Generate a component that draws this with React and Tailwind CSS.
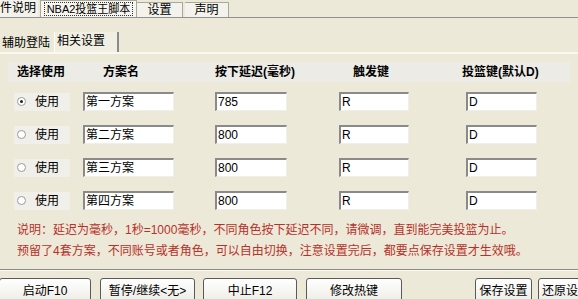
import React from "react";

const font = { fontFamily: '"Liberation Sans", "Noto Sans CJK SC", sans-serif' };

function Radio({ checked }) {
  return (
    <span className="relative inline-block w-[9px] h-[9px] rounded-full border border-[#9a9a9a] bg-white">
      {checked && <span className="absolute left-[2px] top-[2px] w-[3px] h-[3px] rounded-full bg-[#222]" />}
    </span>
  );
}

function Input({ value, w }) {
  return (
    <div
      className={`h-[19px] bg-white border-t-2 border-l-2 border-t-[#8a8a8a] border-l-[#8a8a8a] border-b border-r border-b-[#f0efe8] border-r-[#f0efe8] pl-[1px] text-[12px] leading-[16px] text-black ${w}`}
    >
      {value}
    </div>
  );
}

function Btn({ children, w, className = "" }) {
  return (
    <div
      className={`h-[26px] shrink-0 rounded-[3px] border border-[#5a5a5a] bg-gradient-to-b from-[#ffffff] to-[#ecebe4] flex items-start justify-center pt-[4px] text-[12px] leading-[16px] text-black whitespace-nowrap overflow-hidden ${w} ${className}`}
    >
      {children}
    </div>
  );
}

const rows = [
  { checked: true, name: "第一方案", delay: "785" },
  { checked: false, name: "第二方案", delay: "800" },
  { checked: false, name: "第三方案", delay: "800" },
  { checked: false, name: "第四方案", delay: "800" },
];

export default function App() {
  return (
    <div className="w-[578px] h-[299px] overflow-hidden bg-[#ece9d8] relative" style={font}>
      {/* top tabs */}
      <div className="h-[17px] flex items-end text-[12px] leading-[15px] text-black">
        <div className="w-[38px] h-[17px] pt-[1px] bg-[#f3f2ec]">件说明</div>
        <div className="ml-[2px] w-[97px] h-[17px] bg-[#f6f5ef] border-t border-x border-[#a8a89c] flex items-center justify-center">
          <span className="border border-dotted border-[#333] px-[2px] leading-[12px] text-[11px]">NBA2投篮王脚本</span>
        </div>
        <div className="w-[46px] h-[15px] bg-[#f3f2ec] border-t border-r border-[#a8a89c] text-center">设置</div>
        <div className="ml-[2px] w-[44px] h-[15px] bg-[#f3f2ec] border-t border-r border-[#a8a89c] text-center">声明</div>
      </div>
      <div className="h-[1px] bg-[#919191]" />
      {/* sub tabs */}
      <div className="h-[34px] flex items-end pl-[2px] text-[12px] text-black">
        <div className="w-[52px] h-[18px] leading-[18px]">辅助登陆</div>
        <div className="w-[65px] h-[20px] leading-[18px] pl-[2px] bg-[#f1efe4] border-r-2 border-r-[#8a8a8a] border-l border-l-white">相关设置</div>
      </div>
      <div className="h-[2px] bg-[#fbf9ee]" />
      {/* header */}
      <div className="mt-[8px] h-[20px] mx-[8px] bg-[#ecebe6] flex items-center text-[12px] font-bold text-black leading-[20px]">
        <div className="w-[95px] pl-[9px]">选择使用</div>
        <div className="w-[112px]">方案名</div>
        <div className="w-[138px]">按下延迟(毫秒)</div>
        <div className="w-[109px]">触发键</div>
        <div>投篮键(默认D)</div>
      </div>
      {/* rows */}
      <div className="mt-[10px] flex flex-col gap-[14px]">
        {rows.map((r, i) => (
          <div key={i} className="h-[19px] flex items-center">
            <div className="ml-[14px] w-[56px] h-[18px] bg-[#f0efea] flex items-center pl-[3px] gap-[9px] text-[12px]">
              <Radio checked={r.checked} />
              <span>使用</span>
            </div>
            <div className="ml-[13px]"><Input value={r.name} w="w-[91px]" /></div>
            <div className="ml-[41px]"><Input value={r.delay} w="w-[72px]" /></div>
            <div className="ml-[52px]"><Input value="R" w="w-[70px]" /></div>
            <div className="ml-[57px]"><Input value="D" w="w-[71px]" /></div>
          </div>
        ))}
      </div>
      {/* notes */}
      <div className="mt-[10px] pl-[17px] text-[12px] leading-[21px] text-[#b8302a]">
        <div>说明：延迟为毫秒，1秒=1000毫秒，不同角色按下延迟不同，请微调，直到能完美投篮为止。</div>
        <div>预留了4套方案，不同账号或者角色，可以自由切换，注意设置完后，都要点保存设置才生效哦。</div>
      </div>
      <div className="mt-[7px] h-[1px] bg-[#8c8c84]" />
      <div className="h-[1px] bg-[#fbfaf4]" />
      {/* buttons */}
      <div className="mt-[7px] flex">
        <Btn w="w-[92px]" className="-ml-[1px]">启动F10</Btn>
        <Btn w="w-[95px]" className="ml-[9px]">暂停/继续&lt;无&gt;</Btn>
        <Btn w="w-[94px]" className="ml-[8px]">中止F12</Btn>
        <Btn w="w-[96px]" className="ml-[9px]">修改热键</Btn>
        <Btn w="w-[57px]" className="ml-[73px]">保存设置</Btn>
        <Btn w="w-[57px]" className="ml-[6px] justify-start pl-[3px]">还原设置</Btn>
      </div>
    </div>
  );
}
